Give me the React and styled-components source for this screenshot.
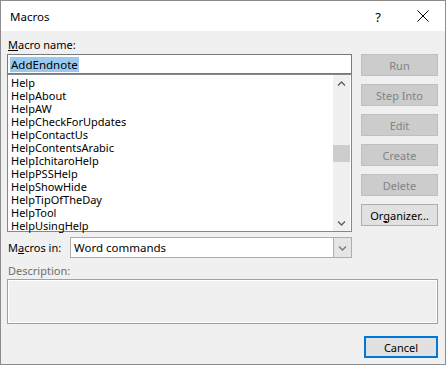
import React from "react"
import styled, { createGlobalStyle } from "styled-components"

const GlobalStyle = createGlobalStyle`
  html, body {
    margin: 0;
    padding: 0;
    background: #ffffff;
  }
  body {
    font-family: "Noto Sans", "Liberation Sans", sans-serif;
    font-size: 11px;
    color: #000;
  }
`

const macros = [
  "Help",
  "HelpAbout",
  "HelpAW",
  "HelpCheckForUpdates",
  "HelpContactUs",
  "HelpContentsArabic",
  "HelpIchitaroHelp",
  "HelpPSSHelp",
  "HelpShowHide",
  "HelpTipOfTheDay",
  "HelpTool",
  "HelpUsingHelp",
]

const buttons = [
  { label: "Run", disabled: true },
  { label: "Step Into", disabled: true },
  { label: "Edit", disabled: true },
  { label: "Create", disabled: true },
  { label: "Delete", disabled: true },
  { label: <>Or<u>g</u>anizer...</>, disabled: false },
]

function Chevron({ down, color = "#606060" }) {
  return (
    <svg width="9" height="6" viewBox="0 0 9 6">
      <path
        d={down ? "M1 1.5 L4.5 5 L8 1.5" : "M1 4.5 L4.5 1 L8 4.5"}
        fill="none"
        stroke={color}
        strokeWidth="1.4"
      />
    </svg>
  )
}

export default function App() {
  return (
    <>
      <GlobalStyle />
      <Window>
        <TitleBar>
          <Title>Macros</Title>
          <TitleActions>
            <HelpMark>?</HelpMark>
            <CloseIcon viewBox="0 0 12 12">
              <path d="M0.5 0.5 L11.5 11.5 M11.5 0.5 L0.5 11.5" stroke="#000" strokeWidth="1" />
            </CloseIcon>
          </TitleActions>
        </TitleBar>
        <Body>
          <Top>
            <LeftColumn>
              <Label><u>M</u>acro name:</Label>
              <NameInput>
                <Selected>AddEndnote</Selected>
              </NameInput>
              <ListBox>
                <Items>
                  {macros.map((m) => (
                    <Item key={m}>{m}</Item>
                  ))}
                </Items>
                <ScrollBar>
                  <ScrollArrow><Chevron /></ScrollArrow>
                  <Track>
                    <Thumb style={{ marginTop: 53 }} />
                  </Track>
                  <ScrollArrow><Chevron down /></ScrollArrow>
                </ScrollBar>
              </ListBox>
              <MacrosRow>
                <InlineLabel>M<u>a</u>cros in:</InlineLabel>
                <Combo>
                  <ComboText>Word commands</ComboText>
                  <ComboButton><Chevron down color="#7a7a7a" /></ComboButton>
                </Combo>
              </MacrosRow>
            </LeftColumn>
            <RightColumn>
              {buttons.map((b, i) => (
                <SideButton key={i} disabled={b.disabled}>{b.label}</SideButton>
              ))}
            </RightColumn>
          </Top>
          <DescLabel>Description:</DescLabel>
          <DescBox />
          <Footer>
            <CancelButton>Cancel</CancelButton>
          </Footer>
        </Body>
      </Window>
    </>
  )
}

const Window = styled.div`
  width: 446px;
  height: 365px;
  box-sizing: border-box;
  border: 1px solid #8c8c8c;
  background: #f0f0f0;
  display: flex;
  flex-direction: column;
`

const TitleBar = styled.div`
  height: 30px;
  background: #ffffff;
  display: flex;
  align-items: center;
  justify-content: space-between;
  padding: 0 16px 0 9px;
  flex-shrink: 0;
`

const Title = styled.div`
  font-size: 11.5px;
  margin-top: 1px;
`

const TitleActions = styled.div`
  display: flex;
  align-items: center;
  gap: 36px;
`

const HelpMark = styled.span`
  font-size: 13px;
  margin-top: 1px;
`

const CloseIcon = styled.svg`
  width: 12px;
  height: 12px;
`

const Body = styled.div`
  flex: 1;
  padding: 7px 7px 0 6px;
  display: flex;
  flex-direction: column;
`

const Top = styled.div`
  display: flex;
  gap: 9px;
`

const LeftColumn = styled.div`
  width: 345px;
  display: flex;
  flex-direction: column;
`

const Label = styled.div`
  height: 16px;
  line-height: 14px;
  padding-left: 1px;
`

const NameInput = styled.div`
  height: 20px;
  box-sizing: border-box;
  border: 1px solid #7a7a7a;
  background: #fff;
  display: flex;
  align-items: center;
  padding-left: 2px;
`

const Selected = styled.span`
  background: #99c9ef;
  line-height: 15px;
  padding: 0 1px;
  font-size: 11.5px;
`

const ListBox = styled.div`
  height: 158px;
  box-sizing: border-box;
  border: 1px solid #828790;
  background: #fff;
  display: flex;
`

const Items = styled.div`
  flex: 1;
  padding: 1px 0 0 3px;
`

const Item = styled.div`
  height: 13px;
  line-height: 13px;
  white-space: nowrap;
`

const ScrollBar = styled.div`
  width: 17px;
  margin-right: 1px;
  background: #f0f0f0;
  display: flex;
  flex-direction: column;
`

const ScrollArrow = styled.div`
  height: 17px;
  display: flex;
  align-items: center;
  justify-content: center;
`

const Track = styled.div`
  flex: 1;
`

const Thumb = styled.div`
  height: 17px;
  background: #cdcdcd;
`

const MacrosRow = styled.div`
  margin-top: 5px;
  display: flex;
  align-items: center;
`

const InlineLabel = styled.div`
  width: 62px;
  padding-left: 1px;
`

const Combo = styled.div`
  flex: 1;
  height: 21px;
  box-sizing: border-box;
  border: 1px solid #adadad;
  background: #fff;
  display: flex;
`

const ComboText = styled.div`
  flex: 1;
  line-height: 19px;
  padding-left: 3px;
  font-size: 11.5px;
`

const ComboButton = styled.div`
  width: 17px;
  background: #e5e5e5;
  border-left: 1px solid #adadad;
  display: flex;
  align-items: center;
  justify-content: center;
`

const RightColumn = styled.div`
  width: 77px;
  margin-top: 16px;
  display: flex;
  flex-direction: column;
  gap: 8px;
`

const SideButton = styled.div`
  height: 22px;
  box-sizing: border-box;
  border: 1px solid ${(p) => (p.disabled ? "#bfbfbf" : "#adadad")};
  background: ${(p) => (p.disabled ? "#cccccc" : "#e1e1e1")};
  color: ${(p) => (p.disabled ? "#838383" : "#000")};
  display: flex;
  align-items: center;
  justify-content: center;
`

const DescLabel = styled.div`
  margin-top: 6px;
  height: 15px;
  line-height: 14px;
  padding-left: 1px;
  color: #6d6d6d;
`

const DescBox = styled.div`
  height: 45px;
  box-sizing: border-box;
  border: 1px solid #a0a0a0;
  box-shadow: inset 0 0 0 1px #ffffff;
`

const Footer = styled.div`
  display: flex;
  justify-content: flex-end;
  margin-top: 12px;
`

const CancelButton = styled.div`
  width: 74px;
  height: 22px;
  box-sizing: border-box;
  border: 2px solid #0078d7;
  background: #e1e1e1;
  display: flex;
  align-items: center;
  justify-content: center;
`
